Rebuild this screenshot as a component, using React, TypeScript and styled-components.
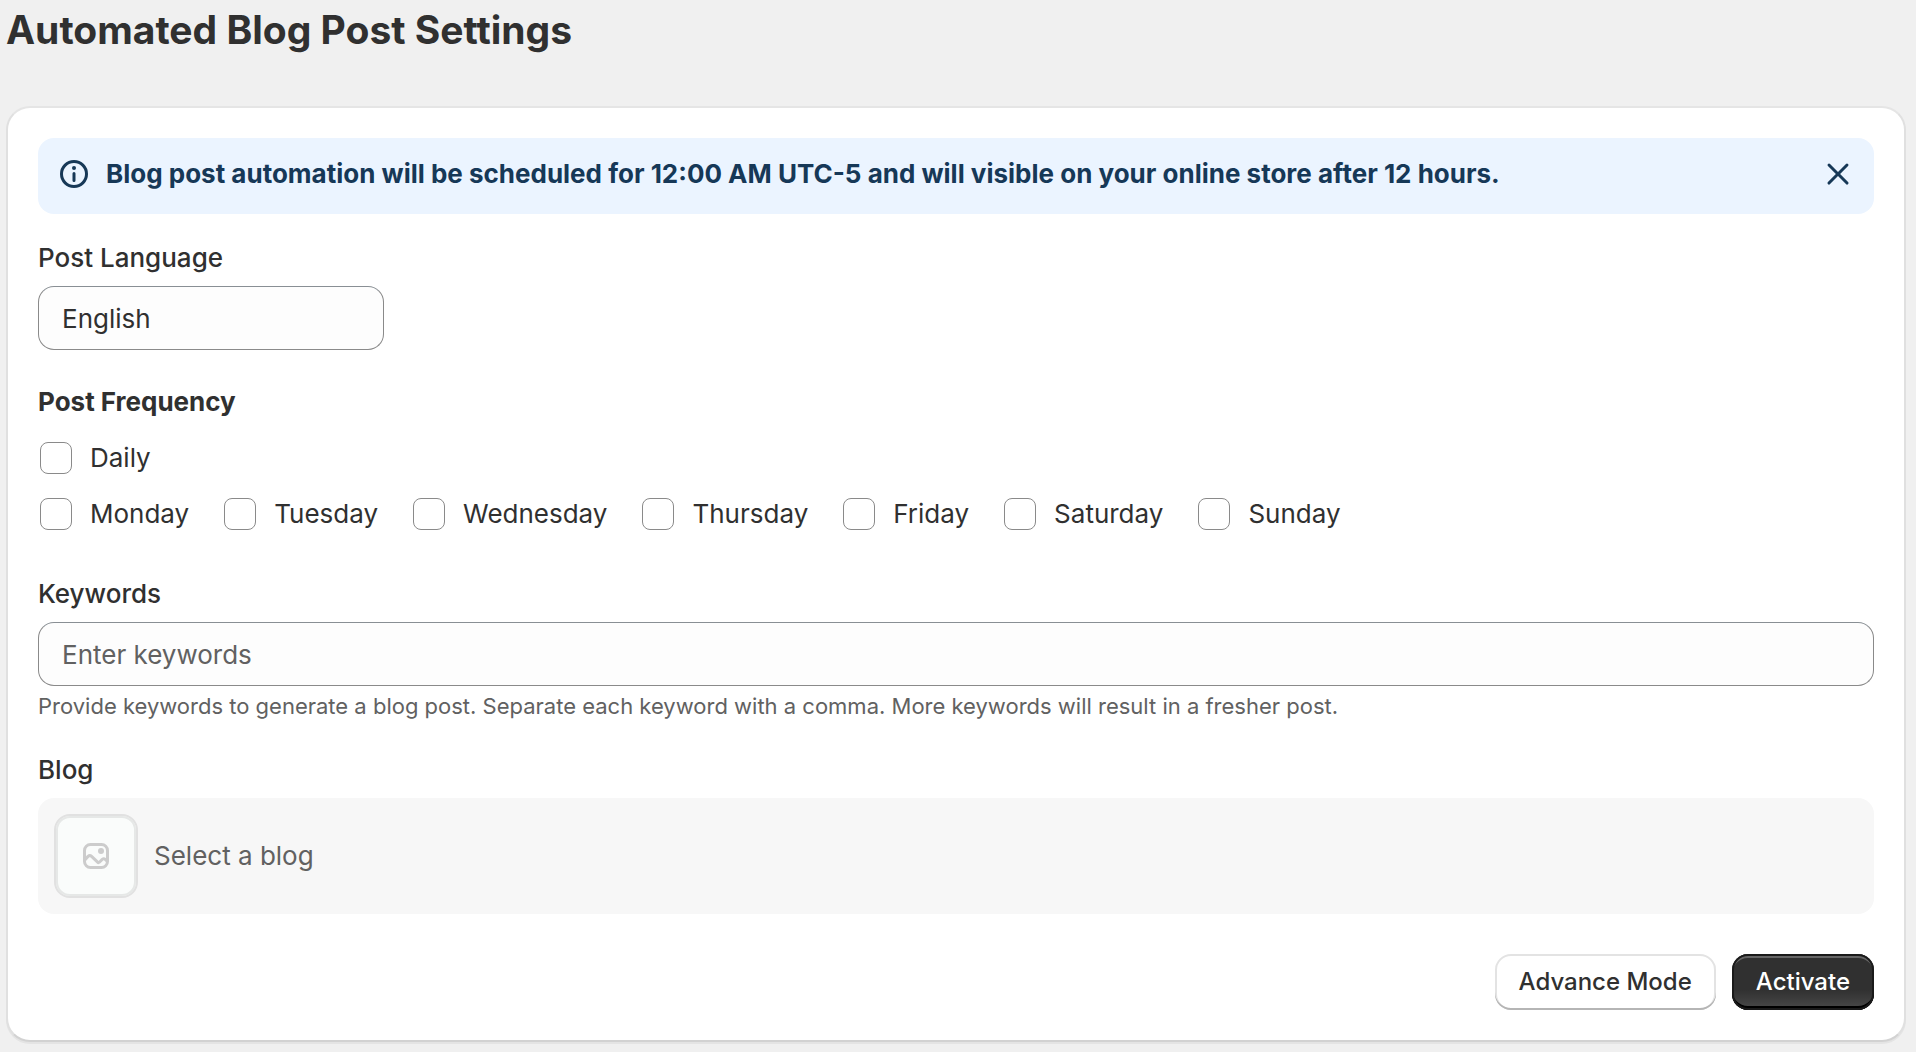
import React, { useState } from "react";
import styled, { createGlobalStyle } from "styled-components";

const GlobalStyle = createGlobalStyle`
  *, *::before, *::after { box-sizing: border-box; }
  body {
    margin: 0;
    background: #f0f0f0;
    color: #303030;
    font-family: Inter, "Liberation Sans", sans-serif;
    font-size: 26px;
    line-height: 40px;
    font-weight: 400;
  }
  input, button { font: inherit; color: inherit; }
`;

const Page = styled.main`
  padding: 6px 10px 12px 6px;
`;

const Title = styled.h1`
  margin: 0 0 52px;
  font-size: 39px;
  line-height: 48px;
  font-weight: 700;
`;

const Card = styled.form`
  display: flex;
  flex-direction: column;
  padding: 30px;
  border: 2px solid #e0e0e0;
  border-top-color: #e5e5e5;
  border-bottom-color: #d2d2d2;
  border-radius: 24px;
  background: #fff;
  box-shadow: 0 2px 0 #e4e4e4;
`;

const Banner = styled.div`
  display: flex;
  align-items: flex-start;
  gap: 12px;
  padding: 16px 16px 20px;
  border-radius: 16px;
  background: #ebf4ff;
  color: #163857;
`;

const BannerText = styled.p`
  flex: 1;
  margin: 0;
  font-weight: 700;
`;

const Icon = styled.svg`
  display: block;
  flex: none;
  width: 40px;
  height: 40px;
  fill: currentColor;
`;

const IconButton = styled.button`
  padding: 0;
  border: 0;
  background: none;
  cursor: pointer;
`;

const Fields = styled.div`
  display: flex;
  flex-direction: column;
  gap: 32px;
  margin: 24px 0 40px;
`;

const Field = styled.div`
  display: flex;
  flex-direction: column;
  align-items: flex-start;
  gap: 8px;
`;

const Label = styled.label`
  font-weight: 500;
`;

const TextInput = styled.input<{ $width: string }>`
  width: ${(p) => p.$width};
  height: 64px;
  padding: 0 23px;
  border: 1px solid #8a8a8a;
  border-top-color: #898f94;
  border-radius: 16px;
  background: #fdfdfd;
  &::placeholder { color: #616161; opacity: 1; }
`;

const HelpText = styled.p`
  margin: 0;
  color: #616161;
  font-size: 22px;
  line-height: 24px;
`;

const FieldSet = styled.fieldset`
  min-width: 0;
  margin: 0;
  padding: 0;
  border: 0;
`;

const Legend = styled.legend`
  margin-bottom: 8px;
  padding: 0;
  font-weight: 700;
`;

const ChoiceRow = styled.div`
  display: flex;
  flex-wrap: wrap;
  column-gap: 33px;
`;

const Choice = styled.label`
  display: flex;
  align-items: center;
  gap: 18px;
  padding: 8px 0 8px 2px;
  cursor: pointer;
`;

const Checkbox = styled.input`
  appearance: none;
  width: 32px;
  height: 32px;
  margin: 0;
  border: 1px solid #8a8a8a;
  border-radius: 8px;
  background: #fff;
  &:checked { border-color: #303030; box-shadow: inset 0 0 0 8px #303030; }
`;

const BlogPicker = styled.button`
  display: flex;
  align-items: center;
  gap: 16px;
  width: 100%;
  padding: 16px;
  border: 0;
  border-radius: 16px;
  background: #f7f7f7;
  color: #616161;
  text-align: left;
  cursor: pointer;
`;

const Thumbnail = styled.span`
  display: grid;
  place-items: center;
  width: 84px;
  height: 84px;
  border: 2px solid #e1e1e1;
  border-radius: 16px;
  background: #fafcfb;
  color: #cccccc;
  box-shadow: inset 0 0 0 2px #e6e8e7;
`;

const Actions = styled.div`
  display: flex;
  justify-content: flex-end;
  gap: 16px;
`;

const Button = styled.button<{ $primary?: boolean }>`
  height: 56px;
  padding: 0 24px;
  border: 0;
  border-radius: 16px;
  font-size: 24px;
  line-height: 32px;
  font-weight: 500;
  cursor: pointer;
  color: ${(p) => (p.$primary ? "#fff" : "#303030")};
  background: ${(p) => (p.$primary ? "linear-gradient(#303030 63%, #4a4a4a)" : "#fff")};
  box-shadow: ${(p) =>
    p.$primary
      ? "inset 0 0 0 2px #1a1a1a, inset 0 -4px 0 #000, inset 0 4px 0 #666"
      : "inset 0 -2px 0 #b5b5b5, inset 0 0 0 2px #e3e3e3"};
`;

const days = ["Monday", "Tuesday", "Wednesday", "Thursday", "Friday", "Saturday", "Sunday"];

function InfoIcon() {
  return (
    <Icon viewBox="0 0 20 20" aria-hidden="true">
      <path d="M10 14a.75.75 0 0 1-.75-.75v-3.5a.75.75 0 0 1 1.5 0v3.5a.75.75 0 0 1-.75.75" />
      <path d="M9 7a1 1 0 1 1 2 0 1 1 0 0 1-2 0" />
      <path fillRule="evenodd" d="M17 10a7 7 0 1 1-14 0 7 7 0 0 1 14 0m-1.5 0a5.5 5.5 0 1 0-11 0 5.5 5.5 0 0 0 11 0" />
    </Icon>
  );
}

function CloseIcon() {
  return (
    <Icon viewBox="0 0 20 20" aria-hidden="true">
      <path d="M13.97 15.03a.75.75 0 1 0 1.06-1.06l-3.97-3.97 3.97-3.97a.75.75 0 0 0-1.06-1.06l-3.97 3.97-3.97-3.97a.75.75 0 0 0-1.06 1.06l3.97 3.97-3.97 3.97a.75.75 0 1 0 1.06 1.06l3.97-3.97 3.97 3.97Z" />
    </Icon>
  );
}

function ImageIcon() {
  return (
    <Icon viewBox="0 0 20 20" aria-hidden="true">
      <rect x="4.25" y="4.25" width="11.5" height="11.5" rx="3" fill="none" stroke="currentColor" strokeWidth="1.5" />
      <circle cx="12.5" cy="7.5" r="1.5" />
      <path
        d="m4.2 12.2 1.8-2q.9-.8 1.8 0l3 2.9q.4.4.9 0l1.4-1.4q.8-.6 1.5 0l1.2 1.1"
        fill="none"
        stroke="currentColor"
        strokeWidth="1.5"
      />
    </Icon>
  );
}

function DayChoice({ name }: { name: string }) {
  return (
    <Choice>
      <Checkbox type="checkbox" name={name} />
      {name}
    </Choice>
  );
}

export default function App() {
  const [bannerOpen, setBannerOpen] = useState(true);
  return (
    <Page>
      <GlobalStyle />
      <Title>Automated Blog Post Settings</Title>
      <Card onSubmit={(e) => e.preventDefault()}>
        {bannerOpen && (
          <Banner role="status">
            <InfoIcon />
            <BannerText>
              Blog post automation will be scheduled for 12:00 AM UTC-5 and will visible on your online store after 12 hours.
            </BannerText>
            <IconButton type="button" aria-label="Dismiss" onClick={() => setBannerOpen(false)}>
              <CloseIcon />
            </IconButton>
          </Banner>
        )}
        <Fields>
          <Field>
            <Label htmlFor="language">Post Language</Label>
            <TextInput id="language" $width="346px" defaultValue="English" />
          </Field>
          <FieldSet>
            <Legend>Post Frequency</Legend>
            <ChoiceRow>
              <DayChoice name="Daily" />
            </ChoiceRow>
            <ChoiceRow>
              {days.map((day) => (
                <DayChoice key={day} name={day} />
              ))}
            </ChoiceRow>
          </FieldSet>
          <Field>
            <Label htmlFor="keywords">Keywords</Label>
            <TextInput id="keywords" $width="100%" placeholder="Enter keywords" />
            <HelpText>
              Provide keywords to generate a blog post. Separate each keyword with a comma. More keywords will result in a fresher post.
            </HelpText>
          </Field>
          <Field>
            <Label htmlFor="blog">Blog</Label>
            <BlogPicker id="blog" type="button">
              <Thumbnail>
                <ImageIcon />
              </Thumbnail>
              Select a blog
            </BlogPicker>
          </Field>
        </Fields>
        <Actions>
          <Button type="button">Advance Mode</Button>
          <Button type="submit" $primary>
            Activate
          </Button>
        </Actions>
      </Card>
    </Page>
  );
}
